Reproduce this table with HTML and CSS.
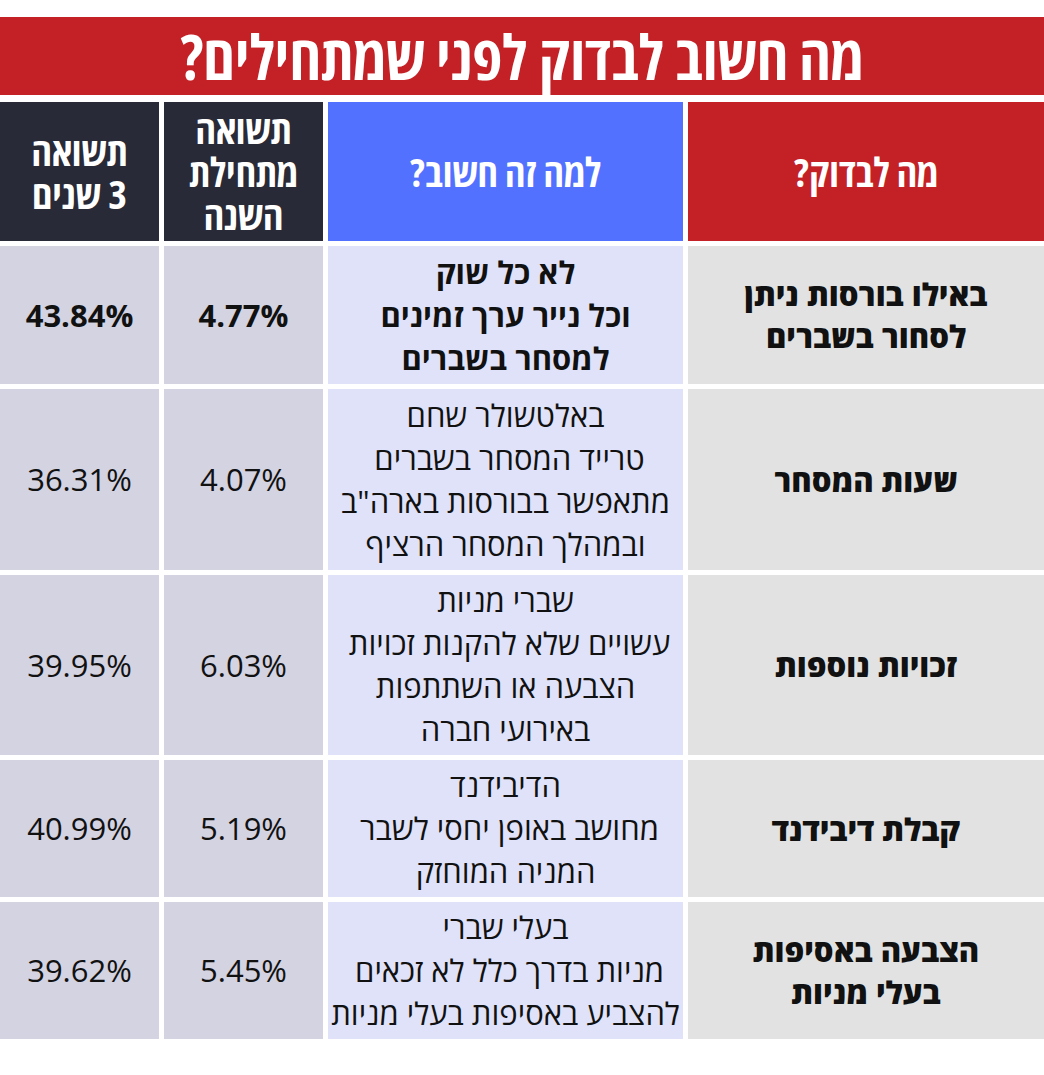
FILE: index.html
```html
<!DOCTYPE html>
<html lang="he" dir="rtl">
<head>
<meta charset="utf-8">
<title>מה חשוב לבדוק לפני שמתחילים?</title>
<link rel="stylesheet" href="styles.css">
</head>
<body>
<main class="page">
  <h1 class="title"><span class="cond">מה חשוב לבדוק לפני שמתחילים?</span></h1>
  <div class="table">
    <div class="cell head head-red"><span class="cond">מה לבדוק?</span></div>
    <div class="cell head head-blue"><span class="cond">למה זה חשוב?</span></div>
    <div class="cell head head-dark"><span class="cond">תשואה<br>מתחילת<br>השנה</span></div>
    <div class="cell head head-dark"><span class="cond">תשואה<br>3 שנים</span></div>

    <div class="cell topic">באילו בורסות ניתן<br>לסחור בשברים</div>
    <div class="cell why strong">לא כל שוק<br>וכל נייר ערך זמינים<br>למסחר בשברים</div>
    <div class="cell num strong">4.77%</div>
    <div class="cell num strong">43.84%</div>

    <div class="cell topic">שעות המסחר</div>
    <div class="cell why">באלטשולר שחם<br>טרייד המסחר בשברים&nbsp;<br>מתאפשר בבורסות בארה"ב<br>ובמהלך המסחר הרציף</div>
    <div class="cell num">4.07%</div>
    <div class="cell num">36.31%</div>

    <div class="cell topic">זכויות נוספות</div>
    <div class="cell why">שברי מניות<br>עשויים שלא להקנות זכויות&nbsp;<br>הצבעה או השתתפות<br>באירועי חברה</div>
    <div class="cell num">6.03%</div>
    <div class="cell num">39.95%</div>

    <div class="cell topic">קבלת דיבידנד</div>
    <div class="cell why">הדיבידנד<br>מחושב באופן יחסי לשבר&nbsp;<br>המניה המוחזק</div>
    <div class="cell num">5.19%</div>
    <div class="cell num">40.99%</div>

    <div class="cell topic">הצבעה באסיפות<br>בעלי מניות</div>
    <div class="cell why">בעלי שברי<br>מניות בדרך כלל לא זכאים&nbsp;<br>להצביע באסיפות בעלי מניות</div>
    <div class="cell num">5.45%</div>
    <div class="cell num">39.62%</div>
  </div>
</main>
</body>
</html>
```

FILE: styles.css
```css
html, body {
  margin: 0;
  padding: 0;
  background: #ffffff;
}

.page {
  width: 1044px;
  padding-top: 17px;
  font-family: "Open Sans", "DejaVu Sans", sans-serif;
  color: #111111;
}

.title {
  margin: 0 0 7px 0;
  height: 78px;
  background: #c42127;
  color: #ffffff;
  display: flex;
  align-items: center;
  justify-content: center;
  font-size: 62px;
  font-weight: 700;
  line-height: 1;
}

.cond {
  display: inline-block;
  font-stretch: 75%;
}

.table {
  display: grid;
  grid-template-columns: 356px 355px 159px 159px;
  grid-template-rows: 139px 138px 181px 180px 137px 137px;
  column-gap: 5px;
  row-gap: 5px;
}

.cell {
  display: flex;
  align-items: center;
  justify-content: center;
  text-align: center;
  font-size: 31px;
  line-height: 43px;
}

.head {
  color: #ffffff;
  font-weight: 700;
  font-size: 40px;
  line-height: 43px;
}

.head-red { background: #c42127; }
.head-blue { background: #5271ff; }
.head-dark { background: #292a37; }

.topic {
  background: #e2e2e2;
  font-weight: 800;
  font-size: 31px;
  line-height: 42px;
}

.why {
  background: #dfe2f8;
  white-space: nowrap;
}

.num {
  background: #d3d3e2;
  font-size: 31px;
}

.strong {
  font-weight: 700;
}
```
